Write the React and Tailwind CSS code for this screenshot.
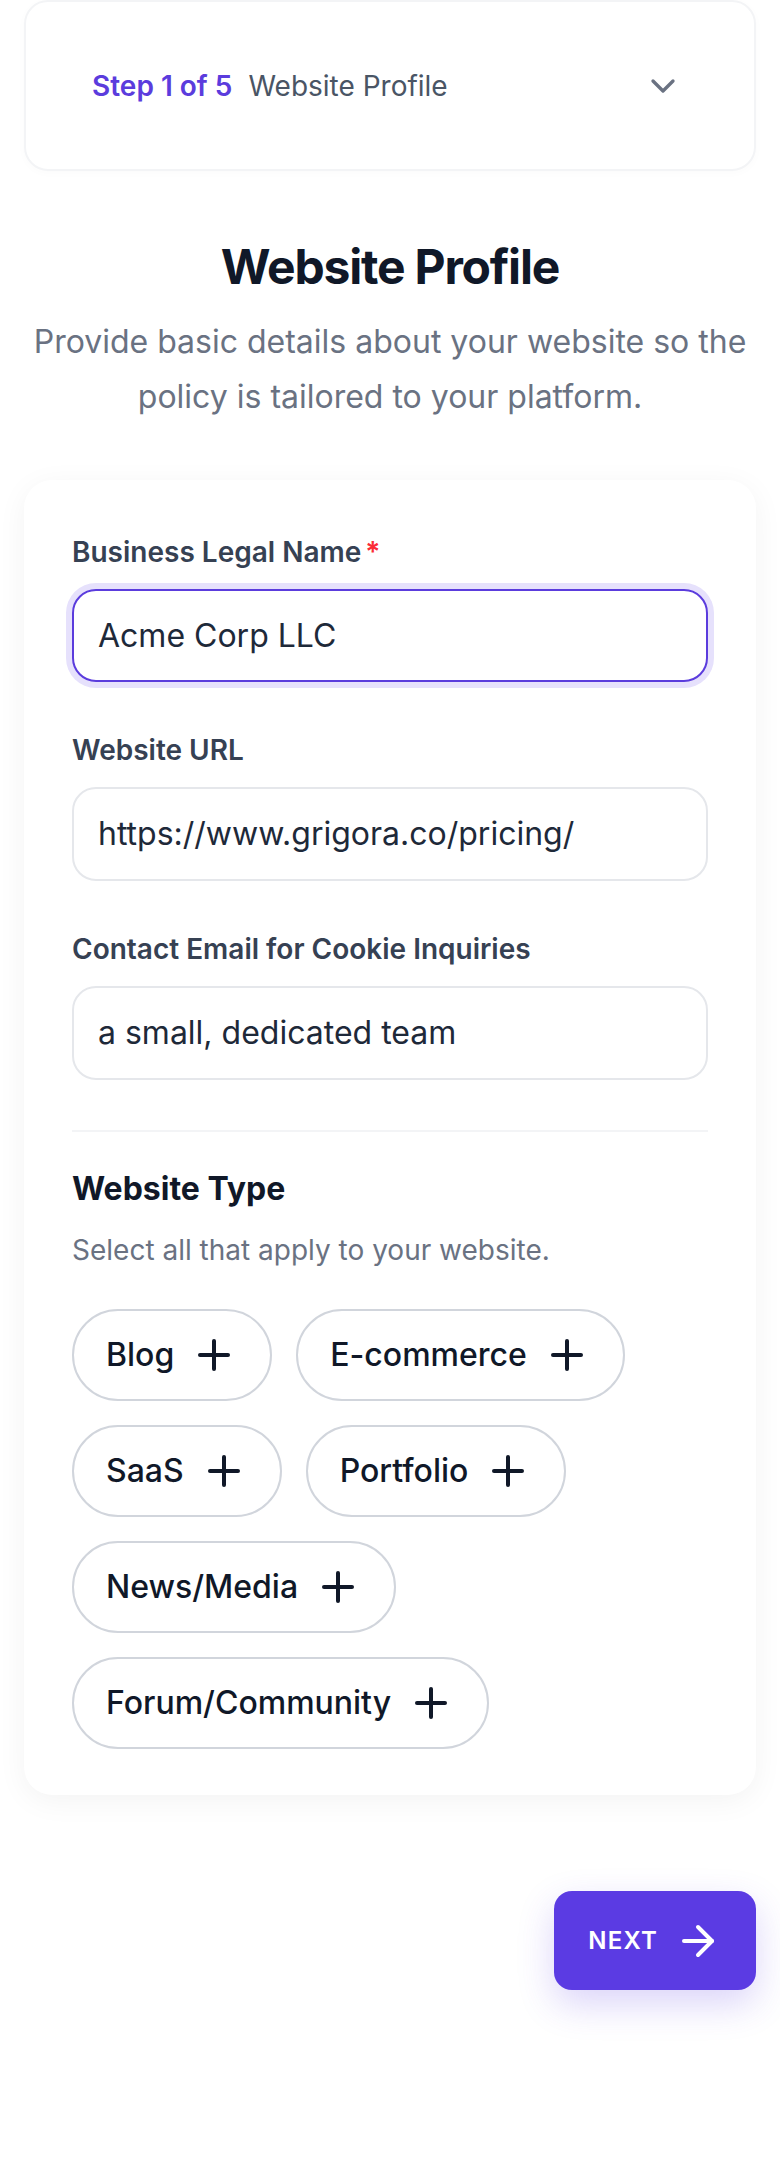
import { ChevronDown, Plus, ArrowRight } from "lucide-react";

const websiteTypes = ["Blog", "E-commerce", "SaaS", "Portfolio", "News/Media", "Forum/Community"];

function Field({ label, value, required, focused, className = "" }) {
    return (
        <div className={className}>
            <label className="flex items-center gap-[4px] text-[28px] font-semibold leading-[40px] text-gray-700">
                {label}
                {required && <span className="text-red-500">*</span>}
            </label>
            <div
                className={
                    focused
                        ? "mt-[17px] flex h-[93px] items-center rounded-[24px] border-2 border-[#5b3cdd] bg-white px-[24px] text-[32px] text-gray-800 ring-[6px] ring-[#e6e1fc]"
                        : "mt-[17px] flex h-[94px] items-center rounded-[24px] border-2 border-gray-200 bg-white px-[24px] text-[32px] text-gray-800"
                }
            >
                {value}
            </div>
        </div>
    );
}

export default function App() {
    return (
        <div className="min-h-[2168px] bg-white px-[24px] font-['Inter',sans-serif]">
            {/* step header */}
            <div className="flex h-[171px] items-center justify-between rounded-[24px] border-2 border-gray-100 bg-white pl-[66px] pr-[71px] shadow-[0_2px_10px_rgba(0,0,0,0.02)]">
                <div className="flex items-center gap-[16px] text-[28px] leading-[40px]">
                    <span className="font-semibold text-[#5b3cdd]">Step 1 of 5</span>
                    <span className="text-gray-600">Website Profile</span>
                </div>
                <ChevronDown size={40} strokeWidth={2} className="text-gray-500" />
            </div>

            <div className="mt-[66px] text-center">
                <h1 className="text-[48px] font-bold leading-[60px] tracking-tight text-gray-900">Website Profile</h1>
                <p className="mt-[17px] text-[32px] leading-[55px] text-gray-500">
                    Provide basic details about your website so the policy is tailored to your platform.
                </p>
            </div>

            {/* form card */}
            <div className="mt-[56px] rounded-[28px] bg-white px-[48px] pb-[46px] pt-[52px] shadow-[0_6px_30px_rgba(0,0,0,0.05)]">
                <Field label="Business Legal Name" value="Acme Corp LLC" required focused />
                <Field className="mt-[48px]" label="Website URL" value="https://www.grigora.co/pricing/" />
                <Field className="mt-[48px]" label="Contact Email for Cookie Inquiries" value="a small, dedicated team" />

                <div className="mt-[50px] h-[2px] bg-gray-100" />

                <h2 className="mt-[33px] text-[32px] font-bold leading-[48px] text-gray-900">Website Type</h2>
                <p className="mt-[17px] text-[28px] leading-[40px] text-gray-500">Select all that apply to your website.</p>

                <div className="mt-[39px] flex flex-wrap gap-[24px]">
                    {websiteTypes.map((type) => (
                        <button
                            key={type}
                            className="flex h-[92px] items-center gap-[16px] rounded-full border-2 border-gray-300 bg-white px-[32px] text-[32px] font-medium text-gray-900"
                        >
                            {type}
                            <Plus size={48} strokeWidth={2} />
                        </button>
                    ))}
                </div>
            </div>

            <div className="mt-[96px] flex justify-end">
                <button className="flex h-[99px] items-center gap-[16px] rounded-[18px] bg-[#5b3be3] px-[34px] text-[24px] font-semibold tracking-wider text-white shadow-[0_14px_36px_rgba(91,59,227,0.22)]">
                    NEXT
                    <ArrowRight size={48} strokeWidth={2} />
                </button>
            </div>
        </div>
    );
}
